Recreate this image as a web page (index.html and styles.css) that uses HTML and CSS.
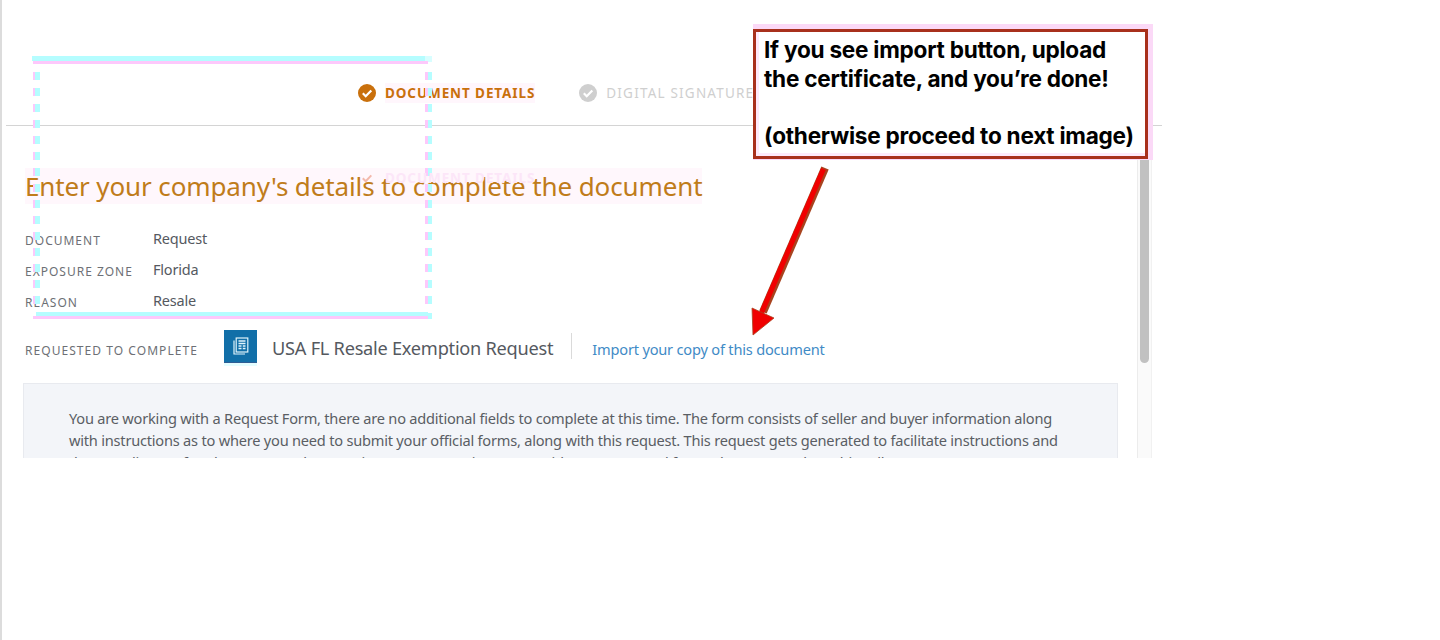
FILE: index.html
```html
<!DOCTYPE html>
<html lang="en">
<head>
<meta charset="utf-8">
<title>Enter your company's details</title>
<link rel="stylesheet" href="styles.css">
</head>
<body>
<div class="page">
  <div class="shot">
    <nav class="steps">
      <div class="step step-active">
        <svg class="step-icon" viewBox="0 0 18 18"><circle cx="9" cy="9" r="9" fill="currentColor"/><path d="M4.8 9.3l2.9 2.9 5.6-5.8" fill="none" stroke="#fff" stroke-width="2.2"/></svg>
        <span class="step-text">DOCUMENT DETAILS</span>
      </div>
      <div class="step step-next">
        <svg class="step-icon" viewBox="0 0 18 18"><circle cx="9" cy="9" r="9" fill="currentColor"/><path d="M4.8 9.3l2.9 2.9 5.6-5.8" fill="none" stroke="#fff" stroke-width="2.2"/></svg>
        <span>DIGITAL SIGNATURE</span>
      </div>
    </nav>
    <main class="content">
      <div class="scroll-body">
        <h1 class="title"><span class="title-text">Enter your company's details to complete the document</span></h1>
        <dl class="meta">
          <div class="meta-row"><dt>DOCUMENT</dt><dd>Request</dd></div>
          <div class="meta-row"><dt>EXPOSURE ZONE</dt><dd>Florida</dd></div>
          <div class="meta-row"><dt>REASON</dt><dd>Resale</dd></div>
        </dl>
        <div class="request">
          <span class="request-label">REQUESTED TO COMPLETE</span>
          <span class="doc-icon">
            <svg viewBox="0 0 16 18" width="16" height="18" fill="none" stroke="#dff3fb" stroke-width="1.2"><path d="M1 3.5V17h11"/><rect x="3.2" y="1" width="11.6" height="14"/><path d="M5.5 4h7M5.5 6.5h7M5.5 9h3M9.8 9h2.7M5.5 11.5h3M9.8 11.5h2.7" stroke-width="1.3"/></svg>
          </span>
          <span class="doc-name">USA FL Resale Exemption Request</span>
          <a class="import" href="#">Import your copy of this document</a>
        </div>
        <div class="notice">
          <p>You are working with a Request Form, there are no additional fields to complete at this time. The form consists of seller and buyer information along with instructions as to where you need to submit your official forms, along with this request. This request gets generated to facilitate instructions and the compliance of each company. Please review your exemption status with your state and forms that may apply to this seller.</p>
        </div>
      </div>
      <div class="scrollbar"><div class="thumb"></div></div>
    </main>
  </div>

  <svg class="ghost-box" viewBox="0 0 402 265" width="402" height="265" fill="none">
    <path d="M2 2.500H395" stroke="#b5fdff" stroke-width="5"/>
    <path d="M395 3H402" stroke="#d8feff" stroke-width="6"/>
    <path d="M3 6.500H398" stroke="#fdc8fb" stroke-width="3"/>
    <path d="M7.500 16V252" stroke="#b5fdff" stroke-width="5" stroke-dasharray="8 8"/>
    <path d="M4 16V252" stroke="#fdc8fb" stroke-width="2" stroke-dasharray="8 8"/>
    <path d="M400 16V252" stroke="#b5fdff" stroke-width="4" stroke-dasharray="8 8"/>
    <path d="M396.500 16V252" stroke="#fdc8fb" stroke-width="3" stroke-dasharray="8 8"/>
    <path d="M6 258H398" stroke="#b5fdff" stroke-width="4"/>
    <path d="M3 261.500H398" stroke="#fdc8fb" stroke-width="3"/>
    <path d="M398 260H402" stroke="#b5fdff" stroke-width="6"/>
  </svg>
  <div class="ghost-step">
    <svg class="step-icon" viewBox="0 0 18 18"><path d="M4.8 9.3l2.9 2.9 5.6-5.8" fill="none" stroke="#f3b9ac" stroke-width="2"/></svg>
    <span>DOCUMENT DETAILS</span>
  </div>
  <div class="callout">
    <p>If you see import button, upload the certificate, and you’re done!</p>
    <p>(otherwise proceed to next image)</p>
  </div>
  <svg class="arrow" viewBox="0 0 90 180" width="90" height="180" fill="none">
    <path d="M77 2L15 146" stroke="#a8431f" stroke-width="8"/>
    <path d="M75.500 3L13.500 147" stroke="#f00000" stroke-width="5"/>
    <path d="M4 142L26 152L5 169Z" fill="#f00000" stroke="#a8431f" stroke-width="0.8"/>
  </svg>
</div>
</body>
</html>
```
FILE: styles.css
```css
* { box-sizing: border-box; }
html, body { margin: 0; padding: 0; background: #fff; }
body { font-family: "Noto Sans", "Open Sans", sans-serif; color: #55595f; overflow: hidden; }
.page { position: relative; width: 1440px; height: 640px; border-left: 2px solid #dcdcdc; overflow: hidden; }
.shot { width: 1156px; height: 458px; margin-left: 4px; overflow: hidden; display: flex; flex-direction: column; }
.steps { height: 126px; flex: none; border-bottom: 1px solid #d4d4d4; display: flex; align-items: flex-start; gap: 44px; padding: 83px 0 0 352px; }
.step { display: flex; align-items: center; gap: 9px; font-size: 13.500px; line-height: 20px; letter-spacing: 0.900px; white-space: nowrap; }
.step-icon { width: 18px; height: 18px; flex: none; }
.step-active { color: #c9700c; font-weight: 700; }
.step-text { background: #fff6fc; }
.step-next { color: #cfcfcf; letter-spacing: 1.200px; }
.content { flex: 1; display: flex; min-height: 0; }
.scroll-body { width: 1131px; padding: 0 0 0 17px; flex: none; }
.title { margin: 40px 0 0 2px; font-size: 26px; line-height: 40px; font-weight: 400; color: #c07c1a; letter-spacing: -0.120px; white-space: nowrap; }
.title-text { background: #fff7fc; }
.meta { margin: 17px 0 0 2px; }
.meta-row { display: flex; height: 31px; align-items: center; }
.meta dt { width: 128px; font-size: 12px; letter-spacing: 1px; color: #6d7075; padding-top: 3px; }
.meta dd { margin: 0; font-size: 14.500px; letter-spacing: -0.200px; color: #55595f; padding-bottom: 2px; }
.request { display: flex; align-items: center; margin: 12px 0 0 2px; height: 36px; }
.request-label { width: 199px; font-size: 12px; letter-spacing: 1.050px; color: #6d7075; padding-top: 9px; white-space: nowrap; }
.doc-icon { width: 33px; height: 33px; background: #116fa8; border-bottom: 1px solid #2f5d94; box-shadow: 0 3px 0 #e4fdff; display: flex; align-items: center; justify-content: center; flex: none; }
.doc-name { margin-left: 15px; height: 26px; padding: 2px 18px 0 0; font-size: 18.200px; letter-spacing: -0.250px; color: #55595f; border-right: 1px solid #dadada; line-height: 26px; white-space: nowrap; }
.import { margin-left: 20px; padding-top: 5px; font-size: 14.600px; letter-spacing: -0.200px; color: #3f8bc6; text-decoration: none; white-space: nowrap; }
.notice { margin-top: 19px; width: 1095px; height: 120px; background: #f3f5f9; border: 1px solid #e8eaef; padding: 23px 44px 24px 45px; }
.notice p { margin: 0; font-size: 14.600px; letter-spacing: -0.220px; line-height: 22px; color: #5a5e64; }
.scrollbar { width: 15px; flex: none; margin-top: 20px; background: #fafafa; border-left: 1px solid #ececec; border-right: 1px solid #f1f1f1; padding: 0 0 0 2px; }
.thumb { width: 9px; height: 217px; background: #c1c1c1; border-radius: 0 0 5px 5px; }
.ghost-box { position: absolute; left: 28px; top: 56px; }
.ghost-step { position: absolute; left: 356px; top: 169px; display: flex; align-items: center; gap: 9px; font-size: 13.500px; letter-spacing: 0.900px; font-weight: 700; color: #fce6f8; }
.callout { position: absolute; left: 751px; top: 29px; width: 395px; height: 130px; background: #fff; border: 3px solid #a8301c; box-shadow: inset 3px 0 0 #fde9fb, inset 0 -3px 0 #fde9fb, 5px -5px 0 0 #fbd9f7, 0 -5px 0 0 #fbd9f7, 5px 1px 0 0 #fbd9f7, 0 1px 0 0 #fbd9f7; padding: 3px 8px 0 8px; font-family: Inter, sans-serif; font-weight: 700; font-size: 22.600px; line-height: 29px; color: #000; letter-spacing: -0.250px; }
.callout p { margin: 0 0 28px; }
.arrow { position: absolute; left: 746px; top: 166px; }
```
